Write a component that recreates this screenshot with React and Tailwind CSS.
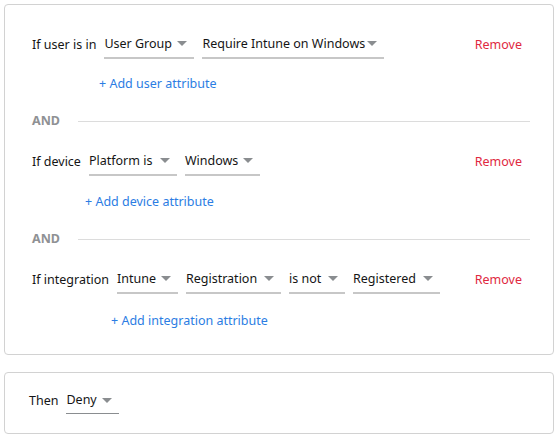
function Caret() {
    return (
        <svg width="10" height="6" viewBox="0 0 10 6" className="shrink-0">
            <path d="M0 0 L10 0 L5 5 Z" fill="#8a8d90" />
        </svg>
    )
}

function Select({ value, width, thin }) {
    return (
        <div
            className={`flex items-center justify-between pr-[7px] ${thin ? "h-[26px] border-b border-[#8a8d90]" : "h-7 border-b-2 border-[#c7c7c7]"}`}
            style={{ width }}
        >
            <span className="whitespace-nowrap">{value}</span>
            <Caret />
        </div>
    )
}

function AddLink({ label, indent }) {
    return (
        <div className="h-5 flex items-center text-[#2b7de3]" style={{ paddingLeft: indent }}>
            {label}
        </div>
    )
}

function AndDivider() {
    return (
        <div className="h-5 flex items-center gap-[18px] pl-1">
            <span className="font-bold text-[#8f9194]">AND</span>
            <div className="flex-1 h-px bg-[#dcdcdc]" />
        </div>
    )
}

function ConditionRow({ label, selects }) {
    return (
        <div className="flex items-center pl-1">
            <span className="whitespace-nowrap">{label}</span>
            <div className="flex items-center gap-2 ml-2">
                {selects.map((s, i) => (
                    <Select key={i} value={s.value} width={s.width} />
                ))}
            </div>
            <span className="ml-auto mr-2 text-[#e0293f]">Remove</span>
        </div>
    )
}

export default function App() {
    return (
        <div
            className="w-[558px] h-[439px] bg-white p-1 text-[12.5px] text-[#151515]"
            style={{ fontFamily: '"Noto Sans", "Open Sans", sans-serif' }}
        >
            <div className="border border-[#d2d2d2] rounded-[4px] pl-[23px] pr-[23px] pt-[26px] pb-[23px] h-[351px]">
                <ConditionRow
                    label="If user is in"
                    selects={[
                        { value: "User Group", width: 90 },
                        { value: "Require Intune on Windows", width: 182 },
                    ]}
                />
                <div className="mt-[15px]">
                    <AddLink label="+ Add user attribute" indent={71} />
                </div>
                <div className="mt-[17px]">
                    <AndDivider />
                </div>
                <div className="mt-[17px]">
                    <ConditionRow
                        label="If device"
                        selects={[
                            { value: "Platform is", width: 88 },
                            { value: "Windows", width: 75 },
                        ]}
                    />
                </div>
                <div className="mt-[16px]">
                    <AddLink label="+ Add device attribute" indent={57} />
                </div>
                <div className="mt-[17px]">
                    <AndDivider />
                </div>
                <div className="mt-[17px]">
                    <ConditionRow
                        label="If integration"
                        selects={[
                            { value: "Intune", width: 61 },
                            { value: "Registration", width: 95 },
                            { value: "is not", width: 56 },
                            { value: "Registered", width: 87 },
                        ]}
                    />
                </div>
                <div className="mt-[17px]">
                    <AddLink label="+ Add integration attribute" indent={83} />
                </div>
            </div>
            <div className="mt-[17px] border border-[#d2d2d2] rounded-[4px] pl-6 pt-[15px] pb-[18px] h-[62px]">
                <div className="flex items-center">
                    <span>Then</span>
                    <div className="ml-2">
                        <Select value="Deny" width={53} thin />
                    </div>
                </div>
            </div>
        </div>
    )
}
